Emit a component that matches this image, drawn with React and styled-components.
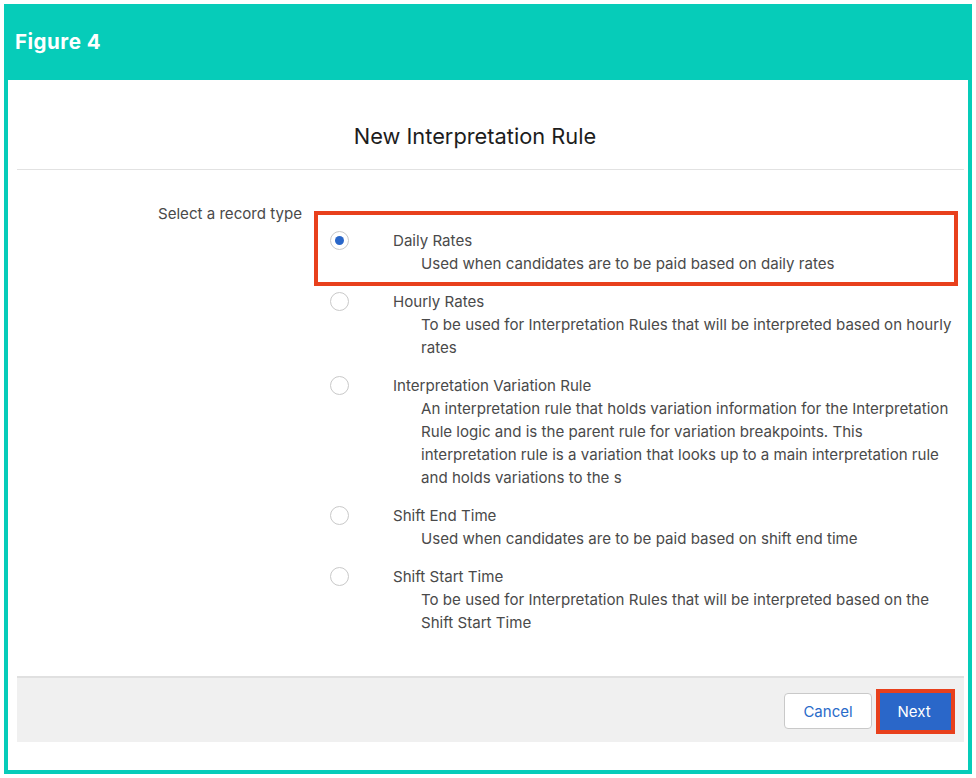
import React from "react";
import styled, { createGlobalStyle } from "styled-components";

const options = [
  {
    title: "Daily Rates",
    desc: ["Used when candidates are to be paid based on daily rates"],
    checked: true,
  },
  {
    title: "Hourly Rates",
    desc: ["To be used for Interpretation Rules that will be interpreted based on hourly", "rates"],
  },
  {
    title: "Interpretation Variation Rule",
    desc: [
      "An interpretation rule that holds variation information for the Interpretation",
      "Rule logic and is the parent rule for variation breakpoints. This",
      "interpretation rule is a variation that looks up to a main interpretation rule",
      "and holds variations to the s",
    ],
  },
  {
    title: "Shift End Time",
    desc: ["Used when candidates are to be paid based on shift end time"],
  },
  {
    title: "Shift Start Time",
    desc: ["To be used for Interpretation Rules that will be interpreted based on the", "Shift Start Time"],
  },
];

const App = () => {
  return (
    <>
      <GlobalStyle />
      <Frame>
        <FigureHeader>Figure 4</FigureHeader>
        <Panel>
          <Title>New Interpretation Rule</Title>
          <Body>
            <FieldLabel>Select a record type</FieldLabel>
            <OptionList>
              {options.map((option) => (
                <Option key={option.title} $highlight={option.checked}>
                  <Radio $checked={option.checked} />
                  <OptionText>
                    <OptionTitle>{option.title}</OptionTitle>
                    <OptionDesc>
                      {option.desc.map((line) => (
                        <span key={line}>{line}</span>
                      ))}
                    </OptionDesc>
                  </OptionText>
                </Option>
              ))}
            </OptionList>
          </Body>
          <Footer>
            <CancelButton>Cancel</CancelButton>
            <NextButton>Next</NextButton>
          </Footer>
        </Panel>
      </Frame>
    </>
  );
};

export default App;

const GlobalStyle = createGlobalStyle`
  html, body {
    margin: 0;
    padding: 0;
    background: #ffffff;
  }
  body {
    font-family: "Inter", "Liberation Sans", sans-serif;
    width: 976px;
    height: 778px;
    overflow: hidden;
  }
`;

const Frame = styled.div`
  box-sizing: border-box;
  margin: 4px;
  width: 968px;
  height: 770px;
  border: 4px solid #06ccb9;
  border-top: 0;
  display: flex;
  flex-direction: column;
`;

const FigureHeader = styled.div`
  box-sizing: border-box;
  height: 76px;
  margin: 0 -4px;
  padding: 0 11px 1px;
  background: #06ccb9;
  color: #ffffff;
  font-family: "Inter", sans-serif;
  font-size: 20.5px;
  font-weight: 700;
  letter-spacing: 0.5px;
  display: flex;
  align-items: center;
`;

const Panel = styled.div`
  flex: 1;
  display: flex;
  flex-direction: column;
  padding: 0 4px 28px 9px;
`;

const Title = styled.div`
  height: 90px;
  box-sizing: border-box;
  padding: 23px 31px 0 0;
  display: flex;
  align-items: center;
  justify-content: center;
  border-bottom: 1px solid #e2e2e2;
  color: #1d1d1d;
  font-size: 21.8px;
`;

const Body = styled.div`
  flex: 1;
  display: flex;
  padding-top: 34px;
`;

const FieldLabel = styled.div`
  width: 285px;
  text-align: right;
  color: #4a4a4a;
  font-size: 15.1px;
  line-height: 20px;
  flex-shrink: 0;
`;

const OptionList = styled.div`
  margin-left: 12px;
  margin-top: 25px;
  display: flex;
  flex-direction: column;
  gap: 15px;
`;

const Option = styled.div`
  position: relative;
  display: flex;
  align-items: flex-start;
  padding-left: 16px;

  ${({ $highlight }) =>
    $highlight &&
    `
    &::after {
      content: "";
      position: absolute;
      left: 0;
      top: -18px;
      width: 644px;
      height: 75px;
      box-sizing: border-box;
      border: 4px solid #e8401c;
    }
  `}
`;

const Radio = styled.span`
  box-sizing: border-box;
  width: 19px;
  height: 19px;
  margin-top: 2px;
  border-radius: 50%;
  border: 1px solid #c9c9c9;
  background: #ffffff;
  flex-shrink: 0;
  display: flex;
  align-items: center;
  justify-content: center;

  &::before {
    content: "";
    display: ${({ $checked }) => ($checked ? "block" : "none")};
    width: 9px;
    height: 9px;
    border-radius: 50%;
    background: #2a67c9;
  }
`;

const OptionText = styled.div`
  margin-left: 44px;
  color: #4a4a4a;
  font-size: 15.1px;
  line-height: 23px;
`;

const OptionTitle = styled.div``;

const OptionDesc = styled.div`
  padding-left: 28px;
  display: flex;
  flex-direction: column;
  white-space: nowrap;
`;

const Footer = styled.div`
  box-sizing: border-box;
  height: 66px;
  background: #f0f0f0;
  border-top: 2px solid #e0e0e0;
  display: flex;
  align-items: center;
  justify-content: flex-end;
  gap: 4px;
  padding: 2px 9px 0 0;
`;

const CancelButton = styled.div`
  box-sizing: border-box;
  width: 88px;
  height: 36px;
  padding-top: 1px;
  background: #ffffff;
  border: 1px solid #c9c9c9;
  border-radius: 4px;
  color: #2a6bc9;
  font-size: 15px;
  display: flex;
  align-items: center;
  justify-content: center;
`;

const NextButton = styled.div`
  box-sizing: border-box;
  width: 79px;
  height: 45px;
  padding: 1px 3px 0 0;
  background: #2a67c9;
  border: 4px solid #e8401c;
  color: #ffffff;
  font-size: 15px;
  display: flex;
  align-items: center;
  justify-content: center;
`;
